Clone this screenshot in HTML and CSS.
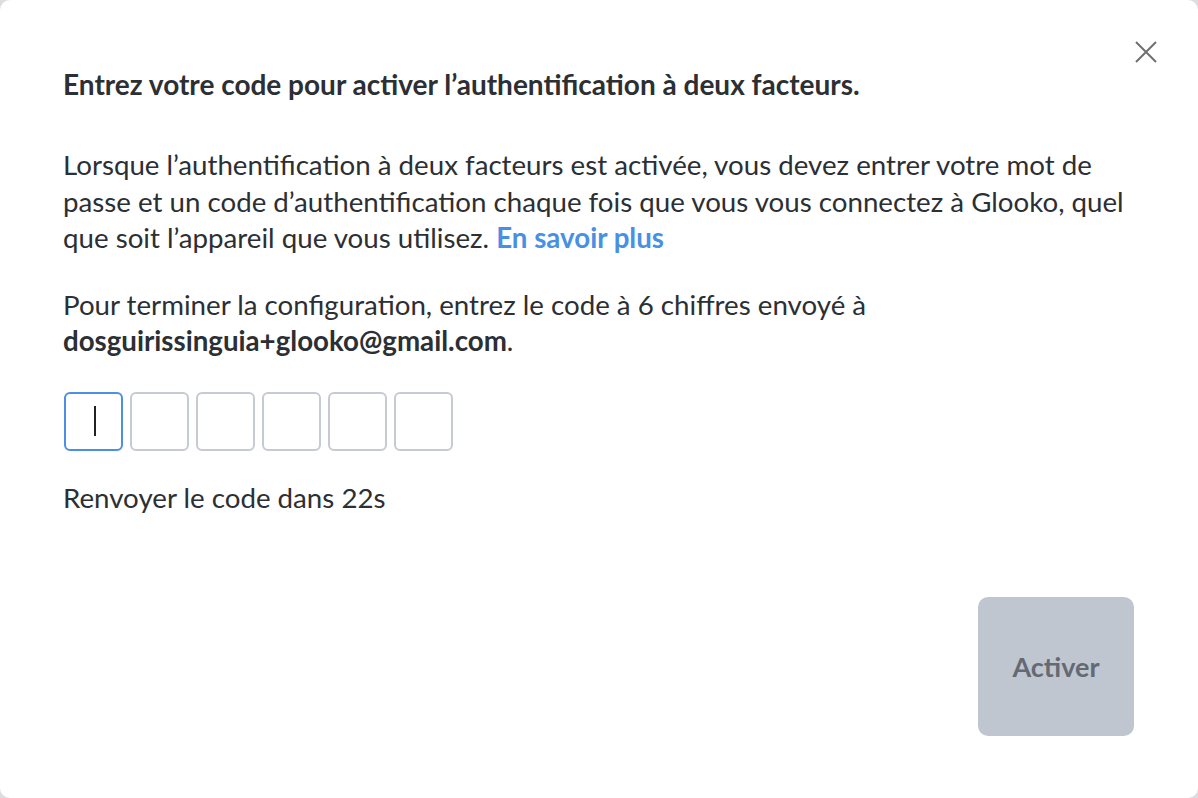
FILE: index.html
```html
<!DOCTYPE html>
<html lang="fr">
<head>
<meta charset="utf-8">
<link rel="stylesheet" href="styles.css">
</head>
<body>
<div class="modal">
  <button class="close" aria-label="Fermer">
    <svg width="24" height="24" viewBox="0 0 24 24"><path d="M2 2 L22 22 M22 2 L2 22" stroke="#707070" stroke-width="2" fill="none"/></svg>
  </button>
  <h1 class="title">Entrez votre code pour activer l’authentification à deux facteurs.</h1>
  <p class="text">Lorsque l’authentification à deux facteurs est activée, vous devez entrer votre mot de passe et un code d’authentification chaque fois que vous vous connectez à Glooko, quel que soit l’appareil que vous utilisez. <a class="link" href="#">En savoir plus</a></p>
  <p class="text">Pour terminer la configuration, entrez le code à 6 chiffres envoyé à <b>dosguirissinguia+glooko@gmail.com</b>.</p>
  <div class="codes">
    <div class="box focus"><span class="caret"></span></div>
    <div class="box"></div>
    <div class="box"></div>
    <div class="box"></div>
    <div class="box"></div>
    <div class="box"></div>
  </div>
  <p class="resend">Renvoyer le code dans 22s</p>
  <div class="actions">
    <button class="activate">Activer</button>
  </div>
</div>
</body>
</html>
```
FILE: styles.css
```css
html, body {
  margin: 0;
  padding: 0;
  background: #dcdde1;
}
.modal {
  position: relative;
  width: 1198px;
  height: 798px;
  box-sizing: border-box;
  background: #ffffff;
  border-radius: 10px;
  padding: 66px 63px 0 63px;
  font-family: Lato, "Noto Sans", sans-serif;
  color: #2c2f33;
  display: flex;
  flex-direction: column;
}
.close {
  position: absolute;
  top: 40px;
  right: 40px;
  width: 24px;
  height: 24px;
  padding: 0;
  border: 0;
  background: none;
}
.title {
  margin: 0;
  font-size: 28px;
  font-weight: 700;
  line-height: 36px;
}
.text {
  margin: 45px -30px 0 0;
  font-size: 27.7px;
  line-height: 36.5px;
}
.text + .text {
  margin-top: 30px;
}
.link {
  color: #4a90e2;
  font-weight: 700;
  text-decoration: none;
}
.codes {
  display: flex;
  gap: 7px;
  margin-top: 32px;
  margin-left: 1px;
}
.box {
  width: 59px;
  height: 59px;
  box-sizing: border-box;
  border: 2px solid #c6cad3;
  border-radius: 6px;
  display: flex;
  align-items: center;
  padding-left: 28px;
}
.box.focus {
  border-color: #4a8fe8;
}
.caret {
  width: 2px;
  height: 30px;
  background: #222;
}
.resend {
  margin: 29px 0 0 0;
  font-size: 27.7px;
  line-height: 36px;
}
.actions {
  display: flex;
  justify-content: flex-end;
  margin-top: 81px;
  padding-right: 1px;
}
.activate {
  width: 156px;
  height: 139px;
  border: 0;
  border-radius: 10px;
  background: #c0c6d0;
  color: #646a73;
  font-family: Lato, "Noto Sans", sans-serif;
  font-size: 27px;
  font-weight: 700;
}
```
